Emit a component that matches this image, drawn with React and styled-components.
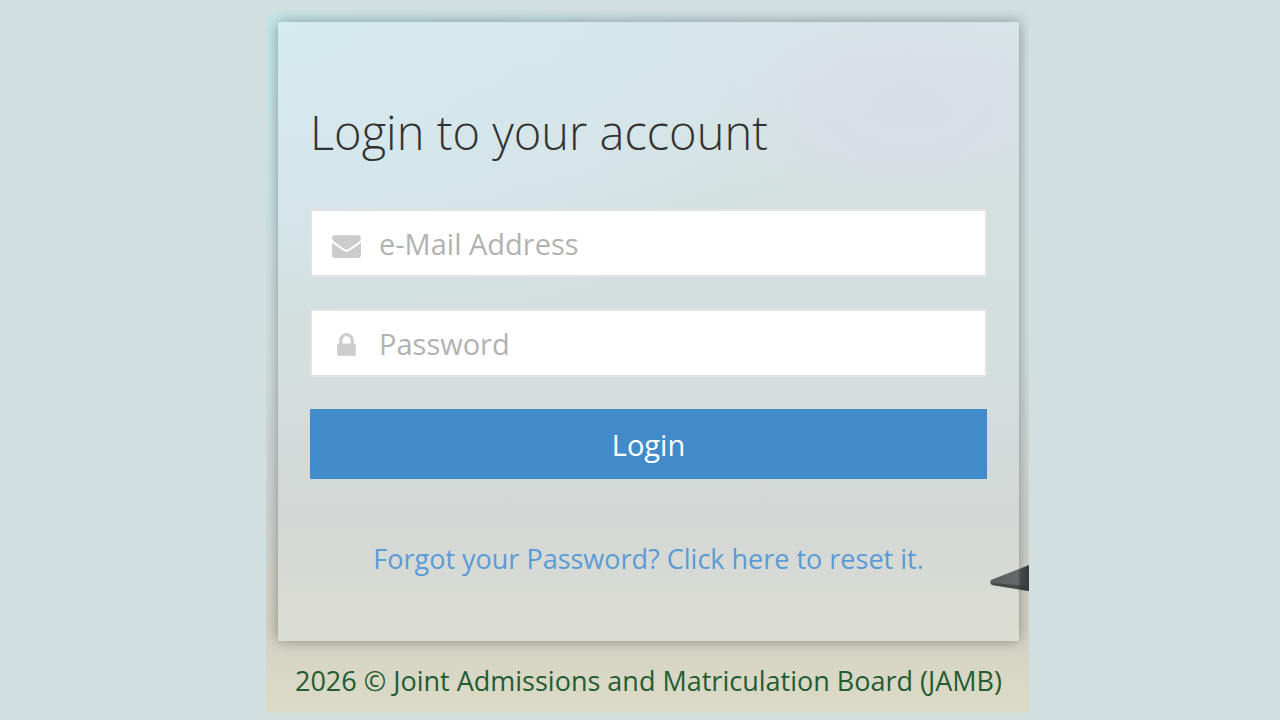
import React, { useState } from 'react';
import styled, { createGlobalStyle } from 'styled-components';

const App = () => {
  // State for form inputs
  const [formData, setFormData] = useState({ email: '', password: '' });

  // Handle input change
  const handleChange = (e) => {
    setFormData({ ...formData, [e.target.name]: e.target.value });
  };

  const handleSubmit = (e) => {
    e.preventDefault();
  };

  return (
    <>
      <GlobalStyle />
      <Page>
        <Backdrop>
          <Card>
            <Title>Login to your account</Title>
            <Form onSubmit={handleSubmit}>
              <Field>
                <FieldIcon viewBox="0 0 1792 1792" aria-hidden="true">
                  <path d="M1792 710v794q0 66-47 113t-113 47h-1472q-66 0-113-47t-47-113v-794q44 49 101 87 362 246 497 345 57 42 92.5 65.5t94.5 48 110 24.5h2q51 0 110-24.5t94.5-48 92.5-65.5q170-123 498-345 57-39 100-87zm0-294q0 79-49 151t-122 123q-376 261-468 325-10 7-42.5 31t-54 38.5-52 32.5-57.5 27-50 9h-2q-23 0-50-9t-57.5-27-52-32.5-54-38.5-42.5-31q-91-64-262-182.5t-205-142.5q-62-42-117-115.5t-55-136.5q0-78 41.5-130t118.5-52h1472q65 0 112.5 47t47.5 113z" />
                </FieldIcon>
                <Input
                  type="email"
                  name="email"
                  aria-label="e-Mail Address"
                  placeholder="e-Mail Address"
                  value={formData.email}
                  onChange={handleChange}
                />
              </Field>
              <Field>
                <FieldIcon viewBox="0 0 1792 1792" aria-hidden="true">
                  <path d="M640 768h512v-192q0-106-75-181t-181-75-181 75-75 181v192zm832 96v576q0 40-28 68t-68 28h-960q-40 0-68-28t-28-68v-576q0-40 28-68t68-28h32v-192q0-184 132-316t316-132 316 132 132 316v192h32q40 0 68 28t28 68z" />
                </FieldIcon>
                <Input
                  type="password"
                  name="password"
                  aria-label="Password"
                  placeholder="Password"
                  value={formData.password}
                  onChange={handleChange}
                />
              </Field>
              <LoginButton type="submit">Login</LoginButton>
            </Form>
            <ResetLink href="#reset">
              Forgot your Password? Click here to reset it.
            </ResetLink>
          </Card>
          <Footer>2026 © Joint Admissions and Matriculation Board (JAMB)</Footer>
          <PenTip viewBox="0 0 40 30" aria-hidden="true">
            <defs>
              <linearGradient id="tip" x1="0" y1="0" x2="1" y2="0">
                <stop offset="0" stopColor="#5a5d5d" />
                <stop offset="0.7" stopColor="#666969" />
                <stop offset="0.8" stopColor="#444747" />
                <stop offset="1" stopColor="#393c3c" />
              </linearGradient>
            </defs>
            <path d="M2 17L40 2V28L3 22Q0 20 2 17Z" fill="url(#tip)" />
            <path d="M2 20L40 23V28L3 22Z" fill="#343636" opacity="0.6" />
          </PenTip>
        </Backdrop>
      </Page>
    </>
  );
};

// Styled Components
const GlobalStyle = createGlobalStyle`
  * {
    box-sizing: border-box;
  }

  body {
    margin: 0;
    background: #d1dfe0;
    font-family: 'Open Sans', sans-serif;
  }
`;

const Page = styled.main`
  display: flex;
  justify-content: center;
  align-items: flex-start;
  min-height: 100vh;
  padding: 10px 0 8px 15px;
`;

const Backdrop = styled.div`
  position: relative;
  display: flex;
  flex-direction: column;
  width: 100%;
  max-width: 763px;
  padding: 12px 10px 0 12px;
  overflow: hidden;
  background:
    linear-gradient(to bottom, #d1dfe0 0, rgba(209, 223, 224, 0) 8px),
    radial-gradient(
      ellipse 75% 45% at 0 0,
      #c6e7ea 0,
      rgba(198, 231, 234, 0) 100%
    ),
    linear-gradient(
      to bottom,
      #cfdee0 0%,
      #d0dfdf 45%,
      #ced3d1 70%,
      #d4d2c4 88%,
      #dcdbc6 100%
    );
`;

const Card = styled.section`
  display: flex;
  flex-direction: column;
  padding: 76px 32px 62px;
  border-radius: 2px;
  background:
    radial-gradient(
      ellipse 28% 18% at 85% 13%,
      rgba(218, 221, 231, 0.85) 0,
      rgba(218, 221, 231, 0) 100%
    ),
    radial-gradient(
      ellipse 80% 50% at 0 0,
      #d5ebf0 0,
      rgba(213, 232, 239, 0.7) 50%,
      rgba(213, 232, 239, 0) 100%
    ),
    linear-gradient(
      to bottom,
      #d7e5e7 0%,
      #d4e0df 35%,
      #d3dedd 60%,
      #d3d7d5 80%,
      #dcddd3 100%
    );
  box-shadow: 0 0 14px rgba(0, 0, 0, 0.35);
`;

const Title = styled.h1`
  margin: 0 0 43px;
  color: #333;
  font-size: 47px;
  font-weight: 300;
  line-height: 68px;
`;

const Form = styled.form`
  display: flex;
  flex-direction: column;
  gap: 32px;
`;

const Field = styled.label`
  display: flex;
  align-items: center;
  gap: 18px;
  height: 68px;
  padding: 0 20px;
  border: 2px solid #e2e2e2;
  background: #fff;
`;

const FieldIcon = styled.svg`
  flex: none;
  width: 29px;
  height: 29px;
  margin-top: 4px;
  fill: #ccc;
`;

const Input = styled.input`
  flex: 1;
  min-width: 0;
  height: 100%;
  padding: 0;
  border: 0;
  outline: 0;
  background: transparent;
  color: #333;
  font-family: inherit;
  font-size: 29px;

  &::placeholder {
    color: #b2b2b2;
    opacity: 1;
  }
`;

const LoginButton = styled.button`
  height: 70px;
  padding: 0;
  border: 0;
  background: #428bca;
  color: #fff;
  font-family: inherit;
  font-size: 29px;
  cursor: pointer;
`;

const ResetLink = styled.a`
  margin-top: 60px;
  color: #5b9bd5;
  font-size: 27px;
  line-height: 40px;
  text-align: center;
  text-decoration: none;
`;

const Footer = styled.footer`
  padding: 20px 0 12px;
  color: #235c31;
  font-size: 27px;
  line-height: 40px;
  text-align: center;
`;

// Tip of the pen lying on the desk behind the form
const PenTip = styled.svg`
  position: absolute;
  right: 0;
  bottom: 120px;
  width: 40px;
  height: 30px;
`;

export default App;
